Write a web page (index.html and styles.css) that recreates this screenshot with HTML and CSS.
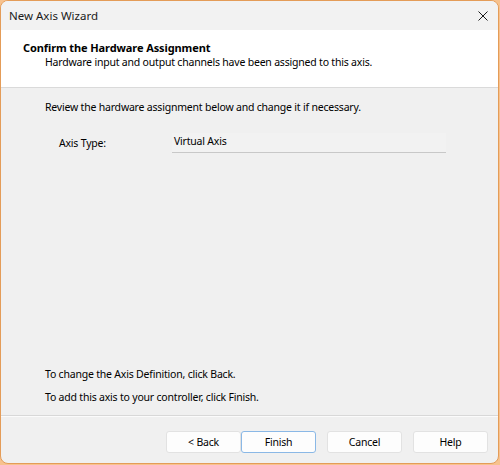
FILE: index.html
```html
<!DOCTYPE html>
<html>
<head>
<meta charset="utf-8">
<link rel="stylesheet" href="styles.css">
</head>
<body>
<div class="window">
  <div class="titlebar">
    <span class="title">New Axis Wizard</span>
    <svg class="close" width="10" height="10" viewBox="0 0 10 10"><path d="M0.5 0.5 L9.5 9.5 M9.5 0.5 L0.5 9.5" stroke="#1a1a1a" stroke-width="1" fill="none"/></svg>
  </div>
  <div class="header">
    <div class="h-title">Confirm the Hardware Assignment</div>
    <div class="h-sub">Hardware input and output channels have been assigned to this axis.</div>
  </div>
  <div class="content">
    <div class="intro">Review the hardware assignment below and change it if necessary.</div>
    <div class="row">
      <div class="label">Axis Type:</div>
      <div class="field">Virtual Axis</div>
    </div>
    <div class="notes">
      <div class="note">To change the Axis Definition, click Back.</div>
      <div class="note">To add this axis to your controller, click Finish.</div>
    </div>
  </div>
  <div class="footer">
    <div class="btn-pair">
      <button class="btn">&lt; Back</button>
      <button class="btn btn-default">Finish</button>
    </div>
    <button class="btn">Cancel</button>
    <button class="btn">Help</button>
  </div>
</div>
</body>
</html>
```
FILE: styles.css
```css
html, body {
  margin: 0;
  padding: 0;
}
body {
  width: 500px;
  height: 465px;
  background: #f7c28e;
  font-family: "Noto Sans", "Open Sans", sans-serif;
  font-size: 10.5px;
  letter-spacing: -0.2px;
  color: #000;
}
.window {
  box-sizing: border-box;
  width: 499px;
  height: 464px;
  border: 1px solid #e49c58;
  border-radius: 8px;
  background: #f0f0f0;
  overflow: hidden;
  display: flex;
  flex-direction: column;
}
.titlebar {
  height: 29px;
  flex: none;
  background: #f2f2f2;
  display: flex;
  align-items: center;
  justify-content: space-between;
  padding: 0 10px 0 8px;
}
.title {
  font-size: 11.5px;
  letter-spacing: 0;
  color: #1a1a1a;
}
.close {
  display: block;
  margin-top: 1px;
}
.header {
  flex: none;
  box-sizing: border-box;
  background: #fff;
  border-bottom: 1px solid #dadada;
  padding: 10px 0 0 22px;
  height: 58px;
  line-height: 15px;
}
.h-title {
  font-weight: bold;
  font-size: 11px;
  letter-spacing: -0.1px;
}
.h-sub {
  padding-left: 22px;
}
.content {
  flex: 1;
  display: flex;
  flex-direction: column;
  padding: 12px 0 10px 44px;
  line-height: 15px;
  border-bottom: 1px solid #d8d8d8;
}
.row {
  display: flex;
  margin-top: 18px;
}
.label {
  width: 113px;
  padding: 3px 0 0 14px;
}
.field {
  width: 272px;
  height: 18px;
  padding: 1px 0 0 2px;
  background: #f2f2f2;
  border-bottom: 1px solid #c8c8c8;
}
.notes {
  margin-top: auto;
  display: flex;
  flex-direction: column;
  gap: 8px;
}
.footer {
  flex: none;
  height: 47px;
  box-sizing: border-box;
  padding: 14px 10px 0 0;
  display: flex;
  justify-content: flex-end;
  gap: 11px;
  border-top: 1px solid #fbfbfb;
}
.btn-pair {
  display: flex;
}
.btn {
  box-sizing: border-box;
  width: 75px;
  height: 22px;
  margin: 0;
  padding: 0;
  font-family: inherit;
  font-size: 10.5px;
  letter-spacing: -0.2px;
  color: #000;
  background: #fdfdfd;
  border: 1px solid #e2e2e2;
  border-radius: 3px;
}
.btn-default {
  border-color: #8ab8e6;
}
```
